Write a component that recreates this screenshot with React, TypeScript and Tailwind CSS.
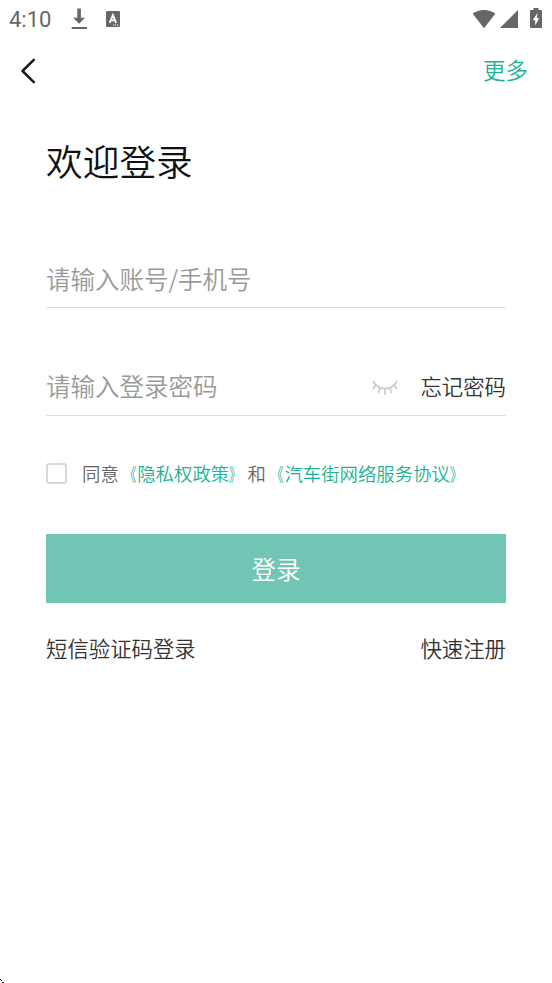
import React from "react";

function StatusBar() {
  return (
    <div className="flex h-[38px] items-center justify-between pl-[9px] pr-[10px] text-[#666666]">
      <div className="flex items-center">
        <span className="w-[62px] pt-px font-['Roboto',sans-serif] text-[22px] font-[450] leading-[38px]">4:10</span>
        <svg width="17" height="22" viewBox="0 0 17 22" fill="currentColor" aria-hidden="true">
          <path d="M6.300 .5h3.600v9.200H14L8.100 15.700 2.200 9.700h4.100zM.7 18.900h15.200v2H.7z" />
        </svg>
        <svg className="ml-[18px]" width="14" height="17" viewBox="0 0 14 17" aria-hidden="true">
          <rect width="14" height="16" rx="1.200" fill="currentColor" />
          <path d="M3.700 11.800 6.900 4.200 10.100 11.800M4.800 9.400h4.200" fill="none" stroke="#fff" strokeWidth="1.900" />
          <path d="M7 13.600h1.200v1H7zm2 0h1.200v1H9zm2 0h1.200v1H11z" fill="#fff" />
        </svg>
      </div>
      <div className="flex items-center">
        <svg width="24" height="19" viewBox="0 0 24 19" fill="currentColor" aria-hidden="true">
          <path d="M.6 3.600C7-1.100 17-1.100 23.400 3.600L12 18.300z" />
        </svg>
        <svg className="ml-[4px]" width="18" height="18" viewBox="0 0 18 18" fill="currentColor" aria-hidden="true">
          <path d="M18 0v18H0z" />
        </svg>
        <svg className="-mt-0.5 ml-[12px]" width="12" height="20" viewBox="0 0 12 20" aria-hidden="true">
          <path d="M3.500 0h5v2H11q1 0 1 1v16q0 1-1 1H1q-1 0-1-1V3q0-1 1-1h2.500z" fill="currentColor" />
          <path d="M7.500 4.800 2.800 12.200h2.400V17.500L9.300 10H6.800z" fill="#fff" />
        </svg>
      </div>
    </div>
  );
}

function ClosedEye() {
  return (
    <svg className="mt-[3px]" width="26" height="16" viewBox="0 0 26 16" fill="none" stroke="#cccccc" strokeWidth="1.700" strokeLinecap="round" aria-hidden="true">
      <path d="M1.300 1.500C6.500 11 19.500 11 24.700 1.500" />
      <path d="M3.700 5.300 1.300 8.500M8 8.200 6.500 12.500M13 9v5M18 8.200l1.500 4.300M22.300 5.300 24.700 8.500" />
    </svg>
  );
}

function Agreement({ title }: { title: string }) {
  return (
    <span className="text-[#1eb193]">
      <span className="inline-block origin-right -translate-x-px scale-x-[0.68]">《</span>
      {title}
      <span className="inline-block origin-left scale-x-[0.66]">》</span>
    </span>
  );
}

export default function App() {
  return (
    <main className="relative flex h-[983px] w-[552px] flex-col overflow-hidden whitespace-nowrap bg-white font-['Noto_Sans_CJK_SC',sans-serif] font-[350] text-[#333333]">
      <StatusBar />
      <header className="flex h-16 items-center justify-between pl-[21px] pr-6">
        <button className="mt-px" aria-label="返回">
          <svg width="15" height="26" viewBox="0 0 15 26" fill="none" stroke="#1c1c1c" strokeWidth="2.500" strokeLinecap="round" strokeLinejoin="round" aria-hidden="true">
            <path d="M12.800 1.800 1.500 13 12.800 24.200" />
          </svg>
        </button>
        <button className="text-[22.500px] leading-8 text-[#1eb193] -mt-0.5">更多</button>
      </header>
      <div className="flex flex-col px-[46px]">
        <h1 className="mt-[31px] h-[54px] text-[36.700px] leading-[54px] text-[#111111]">欢迎登录</h1>
        <div className="mt-[63px] flex h-[58px] items-center border-b border-[#dddddd] pt-px text-[24.500px] text-[#999999]">请输入账号/手机号</div>
        <div className="mt-[50px] flex h-[58px] items-center justify-between border-b border-[#dddddd]">
          <span className="text-[24.500px] text-[#999999]">请输入登录密码</span>
          <div className="flex items-center">
            <ClosedEye />
            <button className="ml-[22px] text-[21.400px]">忘记密码</button>
          </div>
        </div>
        <div className="mt-[42px] flex h-8 items-center text-[18.400px] text-[#666666]">
          <span className="-mt-0.5 mr-[15px] h-[21px] w-[21px] rounded-[3px] border-2 border-[#d5d8dc]" />
          <p>
            同意<Agreement title="隐私权政策" />和<Agreement title="汽车街网络服务协议" />
          </p>
        </div>
        <button className="mt-11 h-[69px] bg-[#71c5b5] pt-px text-[24.500px] text-white">登录</button>
        <div className="mt-[29px] flex h-8 items-center justify-between text-[21.400px]">
          <button>短信验证码登录</button>
          <button>快速注册</button>
        </div>
      </div>
      <svg className="absolute bottom-0 left-0" width="4" height="4" viewBox="0 0 4 4" fill="#111" aria-hidden="true">
        <path d="M0 0h1v1H0zm1 1h1v1H1zm1 2h1v1H2zm1 0h1v1H3z" />
      </svg>
    </main>
  );
}
